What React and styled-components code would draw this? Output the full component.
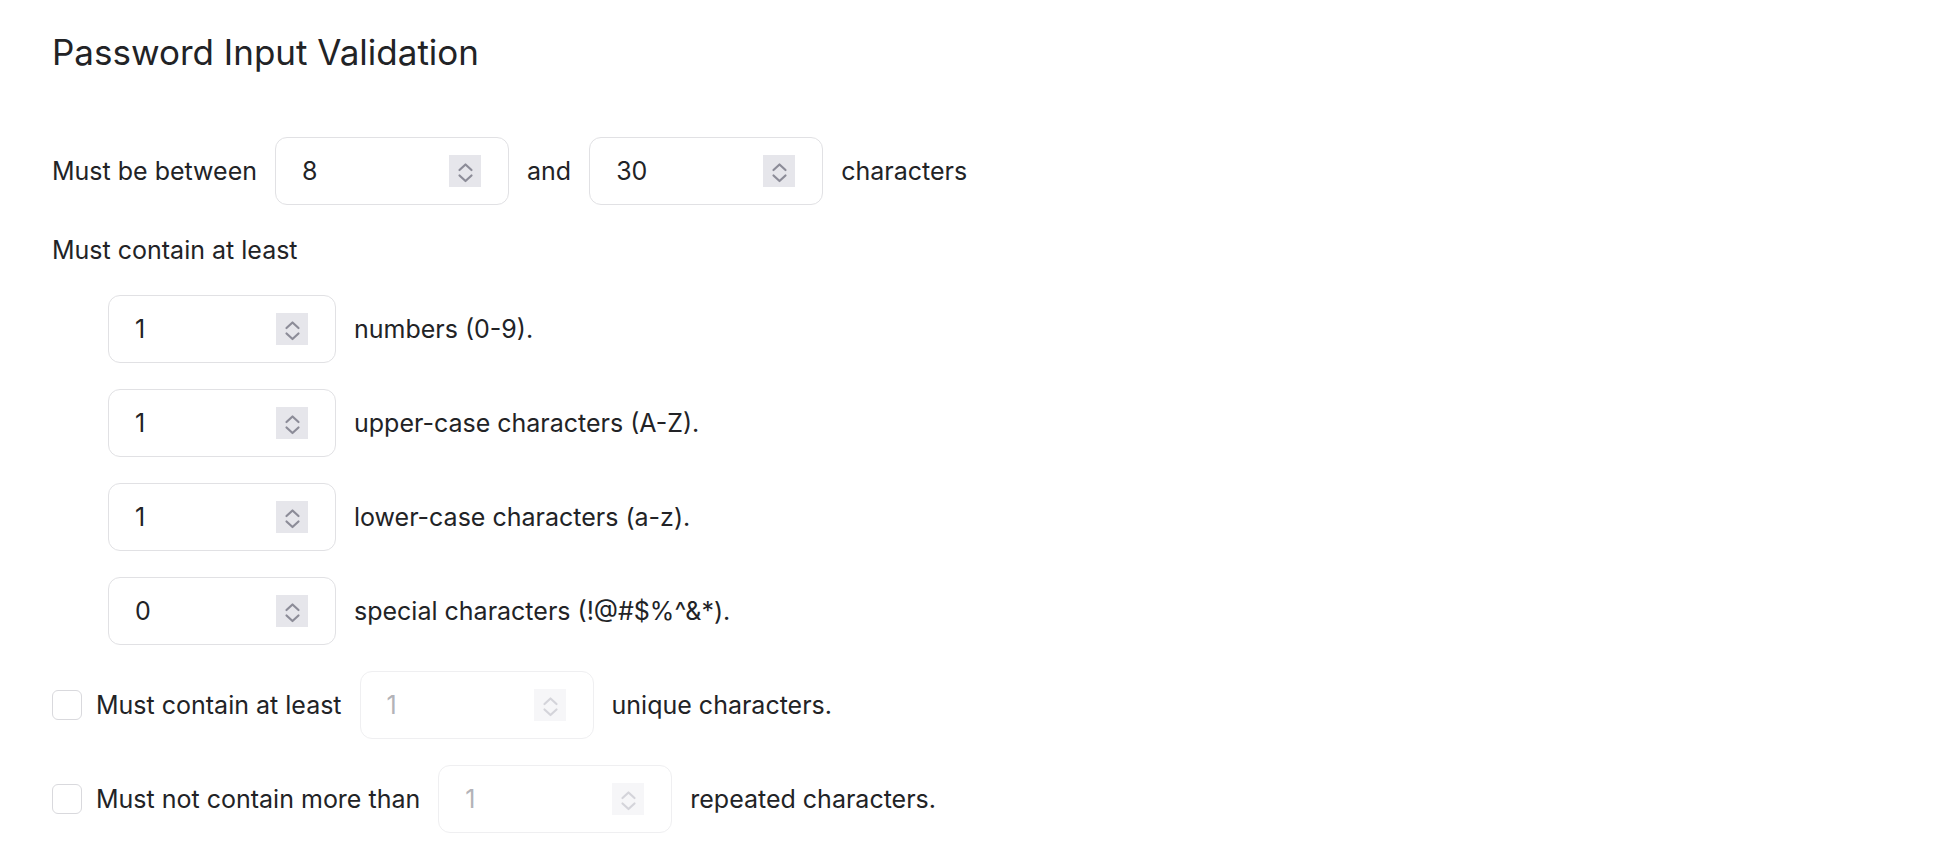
import React from 'react';
import styled, { createGlobalStyle } from 'styled-components';

const GlobalStyle = createGlobalStyle`
  html, body {
    margin: 0;
    padding: 0;
    background: #ffffff;
  }
  body {
    font-family: Inter, "Noto Sans", "Liberation Sans", sans-serif;
    color: #222326;
  }
`;

const Page = styled.div`
  padding: 32px 52px;
`;

const Title = styled.h1`
  margin: 0 0 65px;
  font-size: 35px;
  line-height: 40px;
  font-weight: 400;
  color: #222326;
`;

const Form = styled.div`
  display: flex;
  flex-direction: column;
  gap: 26px;
`;

const Row = styled.div`
  display: flex;
  align-items: center;
  gap: 18px;
  height: 68px;
  padding-left: ${({ indent }) => (indent ? '56px' : '0')};
`;

const Label = styled.span`
  font-size: 25px;
  line-height: 38px;
  color: ${({ muted }) => (muted ? '#b3b3b8' : '#222326')};
  white-space: nowrap;
`;

const Heading = styled(Label)`
  display: block;
`;

const CheckLabel = styled.label`
  display: flex;
  align-items: center;
  gap: 14px;
  cursor: pointer;
`;

const Box = styled.span`
  width: 30px;
  height: 30px;
  box-sizing: border-box;
  border: 1.5px solid #d9d9dd;
  border-radius: 6px;
  background: #fff;
`;

const Field = styled.div`
  display: flex;
  align-items: center;
  box-sizing: border-box;
  width: ${({ wide }) => (wide ? '234px' : '228px')};
  height: 68px;
  padding: 0 27px 0 26px;
  border: 1.5px solid ${({ disabled }) => (disabled ? '#efeff1' : '#e1e1e4')};
  border-radius: 12px;
  background: #fff;
`;

const NumberInput = styled.input`
  flex: 1;
  min-width: 0;
  border: 0;
  outline: none;
  padding: 0;
  background: transparent;
  font-family: inherit;
  font-size: 25px;
  color: ${({ disabled }) => (disabled ? '#b3b3b8' : '#222326')};
`;

const Spinner = styled.span`
  width: 32px;
  height: 32px;
  flex: none;
  background: ${({ disabled }) => (disabled ? '#f6f6f8' : '#e6e6eb')};
  display: flex;
  align-items: center;
  justify-content: center;
  svg {
    stroke: ${({ disabled }) => (disabled ? '#d4d4da' : '#8c8c98')};
  }
`;

const Stepper = ({ value, wide, disabled }) => (
  <Field wide={wide} disabled={disabled}>
    <NumberInput type="text" inputMode="numeric" defaultValue={value} disabled={disabled} />
    <Spinner disabled={disabled}>
      <svg width="32" height="32" viewBox="0 0 32 32" fill="none" strokeWidth="2.2" strokeLinecap="round" strokeLinejoin="round">
        <path d="M10.5 15 L16.5 9.5 L22.5 15" />
        <path d="M10.5 20.5 L16.5 26 L22.5 20.5" />
      </svg>
    </Spinner>
  </Field>
);

const rules = [
  { value: 1, text: 'numbers (0-9).' },
  { value: 1, text: 'upper-case characters (A-Z).' },
  { value: 1, text: 'lower-case characters (a-z).' },
  { value: 0, text: 'special characters (!@#$%^&*).' },
];

export default function App() {
  return (
    <Page>
      <GlobalStyle />
      <Title>Password Input Validation</Title>
      <Form>
        <Row>
          <Label>Must be between</Label>
          <Stepper wide value={8} />
          <Label>and</Label>
          <Stepper wide value={30} />
          <Label>characters</Label>
        </Row>
        <Heading>Must contain at least</Heading>
        {rules.map((r) => (
          <Row indent key={r.text}>
            <Stepper value={r.value} />
            <Label>{r.text}</Label>
          </Row>
        ))}
        <Row>
          <CheckLabel>
            <Box />
            <Label>Must contain at least</Label>
          </CheckLabel>
          <Stepper wide disabled value={1} />
          <Label>unique characters.</Label>
        </Row>
        <Row>
          <CheckLabel>
            <Box />
            <Label>Must not contain more than</Label>
          </CheckLabel>
          <Stepper wide disabled value={1} />
          <Label>repeated characters.</Label>
        </Row>
      </Form>
    </Page>
  );
}
